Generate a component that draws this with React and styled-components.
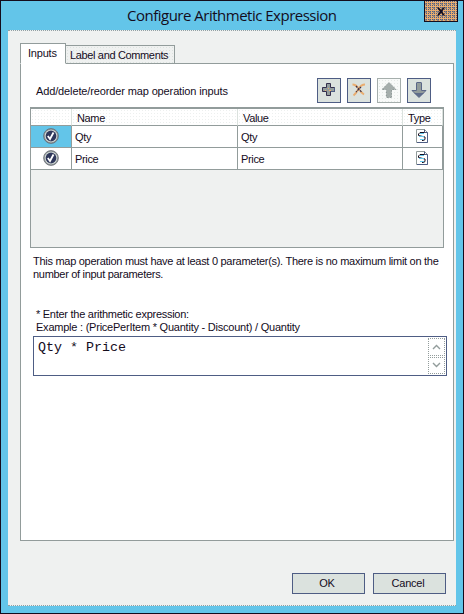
import React from 'react';
import styled, { createGlobalStyle } from 'styled-components';

const Global = createGlobalStyle`
  * { box-sizing: border-box; }
  body { margin: 0; font: 11px/13px "Liberation Sans", Arial, sans-serif; color: #140c1c; }
  button { font: inherit; color: inherit; padding: 0; border-radius: 0; }
`;

const Window = styled.div`
  width: 464px;
  height: 614px;
  border: 1px solid #140c1c;
  background: #63c5e9;
  padding: 0 7px 7px;
  display: flex;
  flex-direction: column;
`;

const TitleBar = styled.header`
  height: 29px;
  flex: none;
  display: flex;
  justify-content: flex-end;
  margin-right: -2px;
`;

const Title = styled.h1`
  flex: 1;
  margin: 0 0 0 119px;
  font: 400 15px/28px "Open Sans", "Noto Sans", sans-serif;
  letter-spacing: -0.5px;
  white-space: nowrap;
`;

const CloseButton = styled.button`
  width: 34px;
  height: 21px;
  flex: none;
  border: 1px solid #140c1c;
  border-top: 0;
  display: grid;
  place-items: center;
  background-color: #e9ad70;
  background-image:
    conic-gradient(#4e5d84 25%, transparent 0),
    conic-gradient(from 180deg, #95877e 25%, transparent 0);
  background-size: 2px 2px, 4px 4px;
`;

const Body = styled.main`
  flex: 1;
  background: #eff1f0;
  border: dotted #92a0a3;
  border-width: 1px 0;
  padding: 12px 2px 0 12px;
  display: flex;
  flex-direction: column;
`;

const Tabs = styled.nav`
  display: flex;
  align-items: flex-end;
  height: 20px;
`;

const Tab = styled.button`
  border: 1px solid #929c9b;
  text-align: left;
  white-space: nowrap;
  width: ${(p) => p.$width}px;
  height: ${(p) => (p.$active ? 21 : 18)}px;
  padding: ${(p) => (p.$active ? '0 0 1px 7px' : '1px 0 0 4px')};
  margin-bottom: ${(p) => (p.$active ? -1 : 0)}px;
  border-bottom: ${(p) => (p.$active ? '1px solid #fff' : '0')};
  border-left-width: ${(p) => (p.$active ? 1 : 0)}px;
  background: ${(p) => (p.$active ? '#fff' : 'radial-gradient(circle, #dce2df 0.7px, transparent 0.8px) 0 0 / 3px 3px #eff1f0')};
  z-index: ${(p) => (p.$active ? 1 : 0)};
  letter-spacing: ${(p) => p.$spacing}px;
`;

const Panel = styled.section`
  width: 434px;
  height: 478px;
  border: 1px solid #929c9b;
  background: #fff;
  padding: 14px 6px 0 9px;
  display: flex;
  flex-direction: column;
`;

const Toolbar = styled.div`
  display: flex;
  height: 25px;
  gap: 6px;
  padding-left: 6px;
`;

const ToolbarLabel = styled.span`
  width: 275px;
  padding-top: 7px;
  white-space: nowrap;
  letter-spacing: ${(p) => p.$spacing}px;
`;

const ToolButton = styled.button`
  width: 24px;
  height: 25px;
  border: 1px solid ${(p) => (p.disabled ? '#a5aeac' : '#4e5d84')};
  background: ${(p) => (p.disabled ? 'radial-gradient(circle, #e4e9e6 0.7px, transparent 0.8px) 0 0 / 3px 3px #f8faf9' : '#dbe2de')};
  display: flex;
  justify-content: center;
  align-items: flex-start;
  padding: ${(p) => p.$top}px 0 0;
`;

const Grid = styled.div`
  width: 414px;
  height: 141px;
  margin-top: 4px;
  border: 1px solid #929c9b;
  border-top-width: 2px;
  background: #eff1f0;
`;

const GridRow = styled.div`
  display: grid;
  grid-template-columns: 41px 166px 165px 40px;
  height: ${(p) => (p.$header ? 17 : 22)}px;
`;

const Cell = styled.div`
  background: ${(p) => (p.$selected ? '#63c5e9' : '#fff')};
  border: solid #929c9b;
  border-width: 0 1px 1px 0;
  padding: ${(p) => (p.$icon ? '0 0 1px' : '1px 0 0 3px')};
  display: flex;
  align-items: center;
  justify-content: ${(p) => (p.$icon ? 'center' : 'flex-start')};
  letter-spacing: -0.35px;
`;

const HeaderCell = styled(Cell)`
  background: radial-gradient(circle, #edf0ef 0.7px, transparent 0.8px) 0 0 / 3px 3px #fff;
  border-right: 1px solid #dbe2de;
  padding: 3px 0 0 5px;
`;

const Note = styled.p`
  margin: ${(p) => p.$top}px 0 0 ${(p) => p.$left}px;
  white-space: nowrap;
`;

const Line = styled.span`
  display: block;
  letter-spacing: ${(p) => p.$spacing}px;
`;

const Expression = styled.div`
  width: 414px;
  height: 40px;
  margin: 2px 0 0 3px;
  border: 1px solid #4e5d84;
  padding: 1px 0 1px 4px;
  display: flex;
  flex: none;
  justify-content: space-between;
  font: 13.33px/19px "Liberation Mono", "Courier New", monospace;
`;

const Spinner = styled.div`
  display: flex;
  flex-direction: column;
  gap: 1px;
  margin-right: 1px;
`;

const SpinButton = styled.button`
  width: 17px;
  height: 18px;
  border: 1px dotted #929c9b;
  background: #fff;
  display: grid;
  place-items: center;
`;

const Footer = styled.footer`
  display: flex;
  gap: 8px;
  justify-content: flex-end;
  padding: 32px 8px 0 0;
`;

const DialogButton = styled.button`
  width: 73px;
  height: 21px;
  border: 1px solid #4e5d84;
  background: #dbe2de;
  padding: 0 3px 0 0;
  letter-spacing: -0.2px;
`;

const CloseIcon = () => (
  <svg width="10" height="9" viewBox="0 0 10 9">
    <path d="M1 .5h2l2 2.5 2-2.5h2L6.2 4.4 9 8.5H6.8L5 5.8 3.2 8.5H1l2.8-4.1z" fill="#140c1c" />
  </svg>
);

const PlusIcon = () => (
  <svg width="14" height="14" viewBox="0 0 14 14">
    <path d="M4.500.500h4v4h4v4h-4v4h-4v-4h-4v-4h4z" fill="#929c9b" stroke="#342f4c" />
    <path d="M3 7.500h1m2-2h1m0 2h2" stroke="#e9ad70" />
    <path d="M9 8.500h3.500v-4" fill="none" stroke="#4e5d84" />
  </svg>
);

const DeleteIcon = () => (
  <svg width="14" height="14" viewBox="0 0 14 14">
    <path d="M.5 1.500Q4 1.500 6.500 5.500T12 11.500M13 1.500Q9 1.500 6.500 6T1.500 12.500" fill="none" stroke="#e9ad70" strokeWidth="1.9" />
    <path d="M4 3l6 6.500M9 4l-5 5" stroke="#342f4c" strokeWidth="1.2" strokeDasharray="2 1" />
  </svg>
);

const ArrowIcon = ({ up }) => (
  <svg width="16" height="16" viewBox="0 0 16 16">
    <g transform={up ? 'rotate(180 8 8)' : undefined}>
      <path
        d="M5.500 1q0-.5.5-.5h4q.500 0 .500.500v7.500h4.500L8 15.500 1 8.500h4.500z"
        fill={up ? '#a5aeac' : '#929c9b'}
        stroke={up ? '#929c9b' : '#5a6788'}
        strokeDasharray={up ? '2 1' : undefined}
      />
      {!up && <path d="M3 11h10L8 15z" fill="#4e5d84" opacity=".75" />}
    </g>
  </svg>
);

const CheckIcon = () => (
  <svg width="16" height="16" viewBox="0 0 16 16">
    <circle cx="8" cy="8" r="7.400" fill="#929c9b" stroke="#5b5b68" strokeWidth=".7" />
    <circle cx="8" cy="8" r="6.200" fill="#dbe2de" />
    <circle cx="8" cy="8" r="5.400" fill="#30385b" />
    <path d="M4.800 8l2.200 3 3.500-6.500" fill="none" stroke="#fff" strokeWidth="1.800" />
  </svg>
);

const ScriptSvg = styled.svg`
  margin-right: 2px;
`;

const ScriptIcon = () => (
  <ScriptSvg width="12" height="14" viewBox="0 0 12 14">
    <path d="M.500.500h8l3 3v10H.500z" fill="#fff" stroke="#929c9b" />
    <path d="M8.500.500v3h3v10H1" fill="none" stroke="#4e5d84" />
    <path d="M8.500 3.500H4L2.500 5v1.500L9 8v2.500L7.500 11.500H6" fill="none" stroke="#140c1c" />
    <path d="M4 4.500h4M3 7.500h5M4 10.500h4" stroke="#63c5e9" />
  </ScriptSvg>
);

const Chevron = ({ up }) => (
  <svg width="9" height="6" viewBox="0 0 9 6">
    <path d={up ? 'M1 5l3.500-3.500L8 5' : 'M1 1l3.500 3.500L8 1'} fill="none" stroke="#929c9b" strokeWidth="1.400" />
  </svg>
);

const inputs = [
  { name: 'Qty', value: 'Qty' },
  { name: 'Price', value: 'Price' },
];

export default function App() {
  return (
    <Window>
      <Global />
      <TitleBar>
        <Title>Configure Arithmetic Expression</Title>
        <CloseButton aria-label="Close"><CloseIcon /></CloseButton>
      </TitleBar>
      <Body>
        <Tabs>
          <Tab $active $width={46} $spacing={-0.2}>Inputs</Tab>
          <Tab $width={109} $spacing={-0.35}>Label and Comments</Tab>
        </Tabs>
        <Panel>
          <Toolbar>
            <ToolbarLabel $spacing={-0.13}>Add/delete/reorder map operation inputs</ToolbarLabel>
            <ToolButton $top={4} aria-label="Add"><PlusIcon /></ToolButton>
            <ToolButton $top={4} aria-label="Delete"><DeleteIcon /></ToolButton>
            <ToolButton $top={3} aria-label="Move up" disabled><ArrowIcon up /></ToolButton>
            <ToolButton $top={3} aria-label="Move down"><ArrowIcon /></ToolButton>
          </Toolbar>
          <Grid>
            <GridRow $header>
              <HeaderCell />
              <HeaderCell>Name</HeaderCell>
              <HeaderCell>Value</HeaderCell>
              <HeaderCell>Type</HeaderCell>
            </GridRow>
            {inputs.map((row, i) => (
              <GridRow key={row.name}>
                <Cell $icon $selected={i === 0}><CheckIcon /></Cell>
                <Cell>{row.name}</Cell>
                <Cell>{row.value}</Cell>
                <Cell $icon><ScriptIcon /></Cell>
              </GridRow>
            ))}
          </Grid>
          <Note $top={7} $left={3}>
            <Line $spacing={-0.28}>This map operation must have at least 0 parameter(s). There is no maximum limit on the</Line>
            <Line $spacing={-0.3}>number of input parameters.</Line>
          </Note>
          <Note $top={27} $left={6}>
            <Line $spacing={-0.27}>* Enter the arithmetic expression:</Line>
            <Line $spacing={-0.23}>Example : (PricePerItem * Quantity - Discount) / Quantity</Line>
          </Note>
          <Expression>
            Qty * Price
            <Spinner>
              <SpinButton aria-label="Scroll up"><Chevron up /></SpinButton>
              <SpinButton aria-label="Scroll down"><Chevron /></SpinButton>
            </Spinner>
          </Expression>
        </Panel>
        <Footer>
          <DialogButton>OK</DialogButton>
          <DialogButton>Cancel</DialogButton>
        </Footer>
      </Body>
    </Window>
  );
}
